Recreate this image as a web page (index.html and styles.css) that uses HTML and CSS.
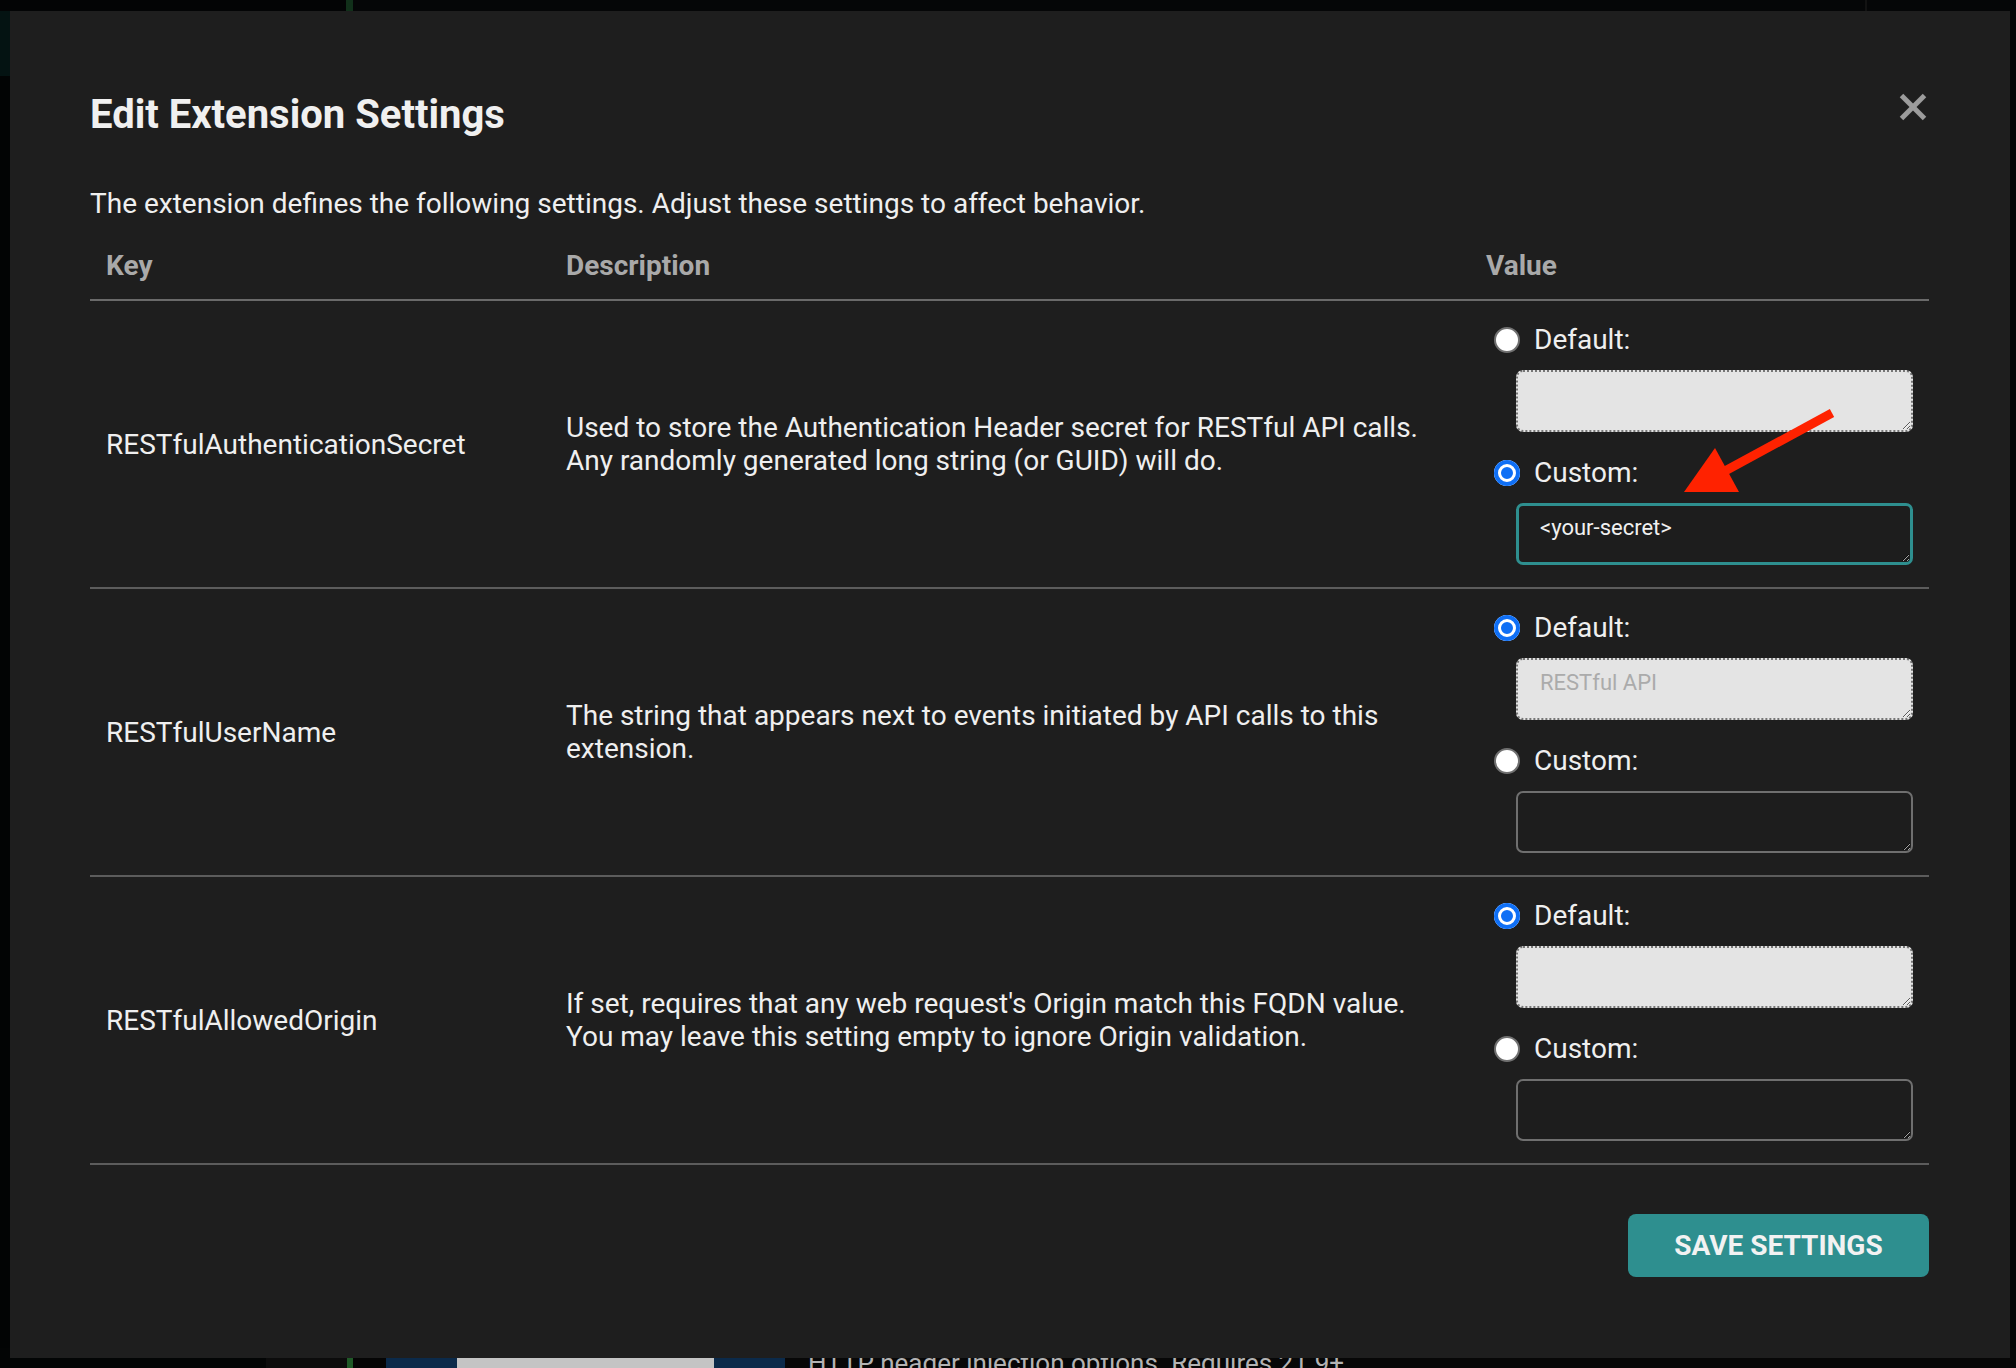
FILE: index.html
```html
<!DOCTYPE html>
<html lang="en">
<head>
<meta charset="utf-8">
<title>Edit Extension Settings</title>
<link rel="stylesheet" href="styles.css">
</head>
<body>
<div class="app">
  <div class="app-top">
    <span class="top-seg top-seg-a"></span>
    <span class="top-seg top-seg-mark"></span>
    <span class="top-seg top-seg-b"></span>
    <span class="top-seg top-seg-div"></span>
    <span class="top-seg top-seg-c"></span>
  </div>
  <div class="app-main">
    <aside class="app-rail"><div class="rail-accent"></div></aside>
    <main class="app-content"></main>
  </div>
  <div class="app-bottom">
    <span class="bot-seg bot-seg-a"></span>
    <span class="bot-seg bot-seg-b"></span>
    <span class="bot-seg bot-seg-green"></span>
    <span class="bot-seg bot-seg-gap"></span>
    <span class="bot-seg bot-seg-blue"></span>
    <span class="bot-seg bot-seg-gray"></span>
    <span class="bot-seg bot-seg-blue"></span>
    <span class="bottom-text">HTTP header injection options. Requires 21.9+</span>
  </div>
</div>

<div class="modal" role="dialog" aria-labelledby="dlg-title">
  <div class="modal-head">
    <h2 id="dlg-title" class="modal-title">Edit Extension Settings</h2>
    <button class="close-btn" type="button" aria-label="Close">
      <svg viewBox="0 0 28 28" width="28" height="28" aria-hidden="true">
        <line x1="2.5" y1="2.5" x2="25.5" y2="25.5"/>
        <line x1="25.5" y1="2.5" x2="2.5" y2="25.5"/>
      </svg>
    </button>
  </div>
  <p class="intro">The extension defines the following settings. Adjust these settings to affect behavior.</p>

  <table class="settings">
    <colgroup>
      <col class="col-key">
      <col class="col-desc">
      <col class="col-value">
    </colgroup>
    <thead>
      <tr><th>Key</th><th>Description</th><th>Value</th></tr>
    </thead>
    <tbody>
      <tr>
        <td class="cell-key">RESTfulAuthenticationSecret</td>
        <td class="cell-desc"><p class="desc">Used to store the Authentication Header secret for RESTful API calls. Any randomly generated long string (or GUID) will do.</p></td>
        <td class="cell-value">
          <div class="opt">
            <label class="opt-label"><span class="radio"></span>Default:</label>
            <textarea class="field field-default" disabled></textarea>
          </div>
          <div class="opt">
            <label class="opt-label"><span class="radio is-checked"></span>Custom:</label>
            <textarea class="field field-custom is-focused">&lt;your-secret&gt;</textarea>
          </div>
        </td>
      </tr>
      <tr>
        <td class="cell-key">RESTfulUserName</td>
        <td class="cell-desc"><p class="desc">The string that appears next to events initiated by API calls to this extension.</p></td>
        <td class="cell-value">
          <div class="opt">
            <label class="opt-label"><span class="radio is-checked"></span>Default:</label>
            <textarea class="field field-default" disabled>RESTful API</textarea>
          </div>
          <div class="opt">
            <label class="opt-label"><span class="radio"></span>Custom:</label>
            <textarea class="field field-custom"></textarea>
          </div>
        </td>
      </tr>
      <tr>
        <td class="cell-key">RESTfulAllowedOrigin</td>
        <td class="cell-desc"><p class="desc">If set, requires that any web request's Origin match this FQDN value. You may leave this setting empty to ignore Origin validation.</p></td>
        <td class="cell-value">
          <div class="opt">
            <label class="opt-label"><span class="radio is-checked"></span>Default:</label>
            <textarea class="field field-default" disabled></textarea>
          </div>
          <div class="opt">
            <label class="opt-label"><span class="radio"></span>Custom:</label>
            <textarea class="field field-custom"></textarea>
          </div>
        </td>
      </tr>
    </tbody>
  </table>

  <div class="actions">
    <button class="save-btn" type="button">SAVE SETTINGS</button>
  </div>

  <svg class="annot-arrow" viewBox="0 0 170 95" width="170" height="95" aria-hidden="true">
    <line x1="162" y1="8" x2="55" y2="66"/>
    <polygon points="45,43 14,87 69,87"/>
  </svg>
</div>
</body>
</html>
```

FILE: styles.css
```css
html, body {
  margin: 0;
  padding: 0;
}

body {
  width: 2016px;
  height: 1368px;
  overflow: hidden;
  position: relative;
  background: #050606;
  font-family: Roboto, "Liberation Sans", Arial, sans-serif;
}

/* ---------- background application (dimmed) ---------- */
.app {
  display: flex;
  flex-direction: column;
  height: 100%;
}

.app-top {
  height: 11px;
  display: flex;
  background: #040506;
}
.top-seg { display: block; height: 100%; }
.top-seg-a { width: 346px; background: #030405; }
.top-seg-mark { width: 7px; background: #11301a; }
.top-seg-b { width: 1512px; background: #050607; }
.top-seg-div { width: 2px; background: #121212; }
.top-seg-c { flex: 1; background: #050607; }

.app-main {
  flex: 1;
  display: flex;
}
.app-rail {
  width: 10px;
  background: #020404;
}
.rail-accent {
  height: 65px;
  background: #041312;
}
.app-content {
  flex: 1;
  background: #060606;
}

.app-bottom {
  height: 20px;
  display: flex;
  align-items: stretch;
  background: #070707;
}
.bot-seg { display: block; }
.bot-seg-a { width: 266px; background: #030505; }
.bot-seg-b { width: 81px; background: #0c0c0c; }
.bot-seg-green { width: 6px; background: #1f5a27; }
.bot-seg-gap { width: 33px; background: #050505; }
.bot-seg-blue { width: 71px; background: #0b2a4a; }
.bot-seg-gray { width: 257px; background: #c4c4c4; }
.bottom-text {
  margin-left: 23px;
  font-size: 26px;
  line-height: 30px;
  color: #b3b3b3;
  white-space: nowrap;
}

/* ---------- modal ---------- */
.modal {
  position: absolute;
  left: 10px;
  top: 11px;
  right: 6px;
  bottom: 10px;
  box-sizing: border-box;
  padding: 80px 81px 0 80px;
  background: #1e1e1e;
  color: #efefef;
}

.modal-head {
  display: flex;
  justify-content: space-between;
  align-items: flex-start;
}

.modal-title {
  margin: 0;
  font-size: 40px;
  font-weight: 700;
  line-height: 47px;
  color: #f0f0f0;
}

.close-btn {
  margin: 2px 2px 0 0;
  padding: 0;
  width: 28px;
  height: 28px;
  border: 0;
  background: transparent;
  cursor: pointer;
}
.close-btn svg {
  display: block;
}
.close-btn line {
  stroke: #9c9c9c;
  stroke-width: 5;
  stroke-linecap: butt;
}

.intro {
  margin: 49px 0 16px;
  font-size: 28px;
  line-height: 33px;
  color: #efefef;
}

/* ---------- settings table ---------- */
.settings {
  width: 100%;
  table-layout: fixed;
  border-collapse: separate;
  border-spacing: 0;
  font-size: 28px;
  line-height: 33px;
}

.col-key { width: 460px; }
.col-desc { width: 920px; }
.col-value { width: 459px; }

.settings th {
  padding: 13px 16px 17px;
  text-align: left;
  font-weight: 700;
  color: #a9a9a9;
  border-bottom: 2px solid #6a6a6a;
}

.settings td {
  padding: 22px 16px;
  vertical-align: middle;
  border-bottom: 2px solid #5c5c5c;
  color: #efefef;
}

.desc {
  margin: 0;
  max-width: 872px;
}

.opt + .opt {
  margin-top: 24px;
}

.opt-label {
  display: flex;
  align-items: center;
  gap: 14px;
  height: 33px;
  padding-left: 8px;
}

.radio {
  display: block;
  flex: none;
  box-sizing: border-box;
  width: 26px;
  height: 26px;
  border-radius: 50%;
  border: 2px solid #707070;
  background: #ffffff;
}
.radio.is-checked {
  border: 0;
  background: #0f6ff5;
  box-shadow: inset 0 0 0 4px #0f6ff5, inset 0 0 0 7px #ffffff;
}

.field {
  display: block;
  box-sizing: border-box;
  width: 397px;
  height: 62px;
  margin: 14px 0 0 30px;
  padding: 10px 22px;
  border-radius: 7px;
  font-family: Roboto, "Liberation Sans", Arial, sans-serif;
  font-size: 22px;
  line-height: 26px;
  resize: both;
  outline: none;
}

.field-default {
  color-scheme: light;
  background: #e4e4e4;
  border: 2px dotted #767676;
  color: #ababab;
  -webkit-text-fill-color: #ababab;
  opacity: 1;
}

.field-custom {
  color-scheme: dark;
  background: #1d1d1d;
  border: 2px solid #6f6f6f;
  color: #f0f0f0;
}
.field-custom.is-focused {
  border: 3px solid #2e8f8f;
  padding: 9px 21px;
}

/* ---------- footer ---------- */
.actions {
  display: flex;
  justify-content: flex-end;
  margin-top: 49px;
}

.save-btn {
  width: 301px;
  height: 63px;
  border: 0;
  border-radius: 8px;
  background: #2e8f8f;
  color: #f2f2f2;
  font-family: Roboto, "Liberation Sans", Arial, sans-serif;
  font-size: 28px;
  font-weight: 700;
  cursor: pointer;
}

/* ---------- annotation arrow ---------- */
.annot-arrow {
  position: absolute;
  left: 1660px;
  top: 394px;
}
.annot-arrow line {
  stroke: #ff2200;
  stroke-width: 9;
  stroke-linecap: butt;
}
.annot-arrow polygon {
  fill: #ff2200;
}
```
